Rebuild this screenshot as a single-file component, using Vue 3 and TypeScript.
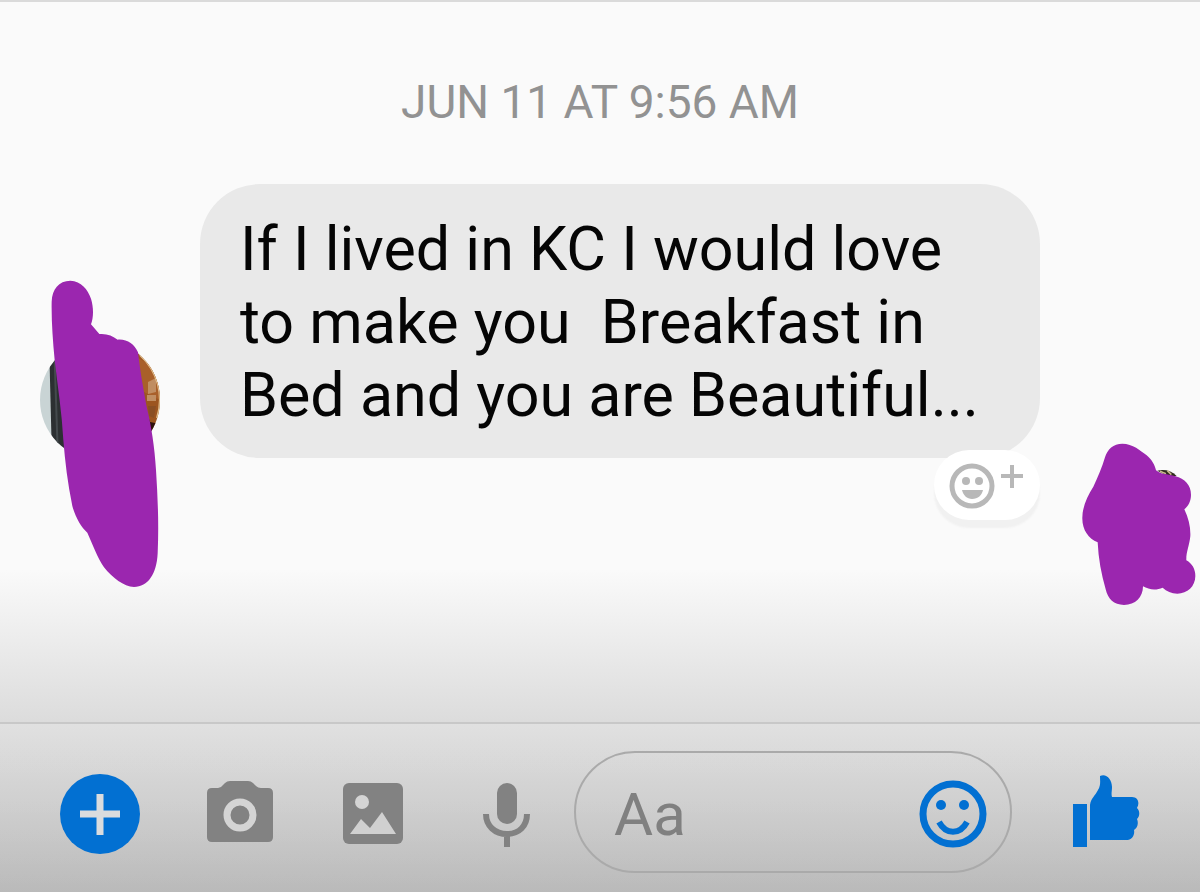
<script setup lang="ts">
import { ref } from 'vue'

const timestamp = 'JUN 11 AT 9:56 AM'
const lines: string[] = [
  'If I lived in KC I would love',
  'to make you \u00a0Breakfast in',
  'Bed and you are Beautiful...',
]
const draft = ref('')
</script>

<template>
  <div class="chat">
    <main class="thread">
      <time class="stamp">{{ timestamp }}</time>
      <div class="message">
        <div class="avatar">
          <svg class="photo" viewBox="0 0 120 120" aria-hidden="true">
            <defs>
              <clipPath id="round"><circle cx="60" cy="60" r="60" /></clipPath>
            </defs>
            <g clip-path="url(#round)">
              <rect width="120" height="120" fill="#c9d4d5" />
              <path d="M9 0H60V120H12Z" fill="#2c3032" />
              <path d="M14 0L18 120" stroke="#444a4d" stroke-width="2" />
              <rect x="60" width="60" height="120" fill="#9c5520" />
              <path d="M98 18L120 30V60L100 50Z" fill="#a9602a" />
              <path d="M108 42l8-4v14l-8 2zM107 55h9v6h-9z" fill="#c08e62" />
              <path d="M90 54l16 16 4 12 10 2v36H60V54z" fill="#2e120e" />
              <path d="M108 66h8l-2 12-5-2z" fill="#8a4f24" />
              <path d="M100 15A60 60 0 0 1 117 78" fill="none" stroke="#e2c08e" stroke-width="2" />
            </g>
          </svg>
          <svg class="scribble-left" viewBox="0 0 540 990" aria-hidden="true">
            <path
              fill="#9b26af"
              d="M95 95C96 58 116 32 151 32C184 33 203 58 213 86C221 112 221 142 213 163L238 192C260 190 278 197 293 209C322 207 343 222 354 247C359 292 368 346 380 410C394 468 404 530 408 600C413 680 417 760 413 850C410 912 384 951 342 951C311 950 278 924 252 892C232 862 218 823 202 788C184 772 166 742 157 708C143 640 135 574 130 510C126 430 113 350 104 270C98 208 94 150 95 95Z"
            />
          </svg>
        </div>
        <div class="bubble">
          <p class="text">
            <span v-for="line in lines" :key="line" class="line">{{ line }}</span>
          </p>
          <button class="react" type="button" aria-label="Add reaction">
            <svg viewBox="0 0 106 70" aria-hidden="true">
              <circle cx="38" cy="36" r="20" fill="none" stroke="#b8b8b8" stroke-width="5" />
              <circle cx="32" cy="31" r="4" fill="#b8b8b8" />
              <circle cx="45" cy="31" r="4" fill="#b8b8b8" />
              <path d="M28 40H49C48 45 44 49 38 49C33 49 29 45 28 40Z" fill="#b8b8b8" />
              <path d="M78 15V38M67 26H89" stroke="#b8b8b8" stroke-width="4" />
            </svg>
          </button>
        </div>
        <svg class="scribble-right" viewBox="0 0 420 570" aria-hidden="true">
          <path d="M292 122C312 117 334 121 350 138L330 142Z" fill="#2e2a1c" />
          <path d="M300 124L318 131M322 122L334 134" stroke="#c9b98c" stroke-width="5" />
          <path
            fill="#9b26af"
            d="M135 82C142 58 160 41 187 41C218 41 242 62 260 76C276 90 284 104 288 121C306 136 326 131 346 139C374 146 393 166 393 194C393 213 385 228 373 238C386 266 392 290 391 318C388 348 378 366 379 391C397 401 406 418 406 438C406 469 382 491 352 491C334 490 320 484 308 473C290 481 267 480 249 469C249 502 226 525 192 525C161 524 144 508 137 478C124 432 115 386 113 337C85 326 66 299 67 263C67 231 82 198 100 170C114 141 126 112 135 82Z"
          />
        </svg>
      </div>
    </main>

    <form class="composer" @submit.prevent>
      <button class="icon plus" type="button" aria-label="More">
        <svg viewBox="0 0 80 80" aria-hidden="true">
          <circle cx="40" cy="40" r="40" fill="#0270d2" />
          <path d="M40 20V61M20 40H60" stroke="#dadcde" stroke-width="7" />
        </svg>
      </button>
      <div class="tools">
        <button class="icon" type="button" aria-label="Camera">
          <svg viewBox="0 0 80 80" aria-hidden="true">
            <path
              fill="#828282"
              d="M12 14H18Q21 14 23 11L25 9Q27 7 30 7H48Q51 7 53 9L56 12Q58 14 61 14H68Q73 14 73 19V63Q73 68 68 68H12Q7 68 7 63V19Q7 14 12 14Z"
            />
            <circle cx="40" cy="41" r="13" fill="none" stroke="#d4d4d4" stroke-width="7" />
          </svg>
        </button>
        <button class="icon" type="button" aria-label="Gallery">
          <svg viewBox="0 0 80 80" aria-hidden="true">
            <rect x="10" y="9" width="60" height="61" rx="6" fill="#828282" />
            <circle cx="29" cy="28" r="7" fill="#d4d4d4" />
            <path d="M17 60L28 45L37 54L49 38L63 60Z" fill="#d0d0d0" />
          </svg>
        </button>
        <button class="icon" type="button" aria-label="Voice message">
          <svg viewBox="0 0 80 80" aria-hidden="true">
            <rect x="31" y="9" width="20" height="41" rx="10" fill="#828282" />
            <path
              d="M20 40C20 52 29 60 41 60C53 60 61 52 61 40M41 60V73"
              fill="none"
              stroke="#828282"
              stroke-width="6"
            />
          </svg>
        </button>
      </div>
      <div class="field">
        <input v-model="draft" class="entry" type="text" placeholder="Aa" aria-label="Message" />
        <button class="emoji" type="button" aria-label="Emoji">
          <svg viewBox="0 0 68 68" aria-hidden="true">
            <circle cx="34" cy="34" r="30" fill="none" stroke="#0270d2" stroke-width="7" />
            <circle cx="22" cy="25" r="5" fill="#0270d2" />
            <circle cx="45" cy="25" r="5" fill="#0270d2" />
            <path d="M20 42C27 55 41 55 48 42" fill="none" stroke="#0270d2" stroke-width="6" />
          </svg>
        </button>
      </div>
      <button class="like" type="button" aria-label="Send thumbs up">
        <svg viewBox="0 0 68 74" aria-hidden="true">
          <rect x="1" y="30" width="14" height="43" fill="#0270d2" />
          <path
            fill="#0270d2"
            d="M18 66V31C19 24 23 22 26 16C29 11 28 7 28 2C34 -1 40 5 40 13C40 17 39 20 40 23H60C66 23 68 29 65 34C68 37 68 42 65 45C67 50 65 54 62 56C63 61 60 66 54 66H18Z"
          />
        </svg>
      </button>
    </form>
  </div>
</template>

<style>
body {
  margin: 0;
}
</style>

<style scoped>
.chat {
  display: flex;
  flex-direction: column;
  box-sizing: border-box;
  min-height: 100vh;
  border-top: 2px solid #dadada;
  background: linear-gradient(to top, #bababa, #fafafa 322px);
  font-family: Roboto, 'Liberation Sans', sans-serif;
}

.thread {
  flex: 1;
  padding: 72px 0 0 40px;
}

.stamp {
  display: block;
  margin-right: 40px;
  color: #929292;
  font-size: 46px;
  line-height: 56px;
  text-align: center;
}

.message {
  position: relative;
  display: flex;
  align-items: flex-end;
  gap: 40px;
  margin-top: 54px;
  padding-right: 160px;
}

.avatar {
  position: relative;
  flex: none;
  width: 120px;
  height: 120px;
  margin-bottom: -2px;
}

.photo {
  display: block;
  width: 100%;
  height: 100%;
}

.scribble-left {
  position: absolute;
  top: -70px;
  left: -20px;
  width: 180px;
  height: 330px;
}

.scribble-right {
  position: absolute;
  right: 0;
  bottom: -162px;
  width: 140px;
  height: 190px;
}

.bubble {
  position: relative;
  flex: 1;
  padding: 29px 40px 26px;
  border-radius: 60px;
  background: #e9e9e9;
}

.text {
  margin: 0;
  color: #050505;
  font-size: 61px;
  line-height: 73px;
}

.line {
  display: block;
  white-space: nowrap;
}

button {
  padding: 0;
  border: 0;
  background: none;
  cursor: pointer;
}

button svg {
  display: block;
  width: 100%;
  height: 100%;
}

.react {
  position: absolute;
  right: 0;
  bottom: -62px;
  width: 106px;
  height: 70px;
  border-radius: 35px;
  background: #fff;
  box-shadow: 0 8px 2px #f1f1f1;
}

.composer {
  display: flex;
  align-items: center;
  padding: 27px 60px 19px;
  border-top: 2px solid #c8c8c8;
  background: linear-gradient(rgba(255, 255, 255, 0.14), transparent);
}

.icon {
  flex: none;
  width: 80px;
  height: 80px;
  margin-top: 4px;
}

.tools {
  display: flex;
  gap: 53px;
  margin: 0 28px 0 60px;
}

.field {
  display: flex;
  flex: 1;
  align-items: center;
  box-sizing: border-box;
  min-width: 0;
  height: 122px;
  margin-right: 60px;
  padding: 0 23px 0 38px;
  border: 2px solid #aaa;
  border-radius: 61px;
}

.entry {
  flex: 1;
  min-width: 0;
  padding: 6px 0 0;
  border: 0;
  outline: 0;
  background: none;
  color: #222;
  font: 60px/72px Roboto, 'Liberation Sans', sans-serif;
}

.entry::placeholder {
  color: #808080;
  opacity: 1;
}

.emoji {
  flex: none;
  width: 68px;
  height: 68px;
  margin-top: 4px;
}

.like {
  flex: none;
  width: 68px;
  height: 74px;
  margin-bottom: 2px;
}
</style>
